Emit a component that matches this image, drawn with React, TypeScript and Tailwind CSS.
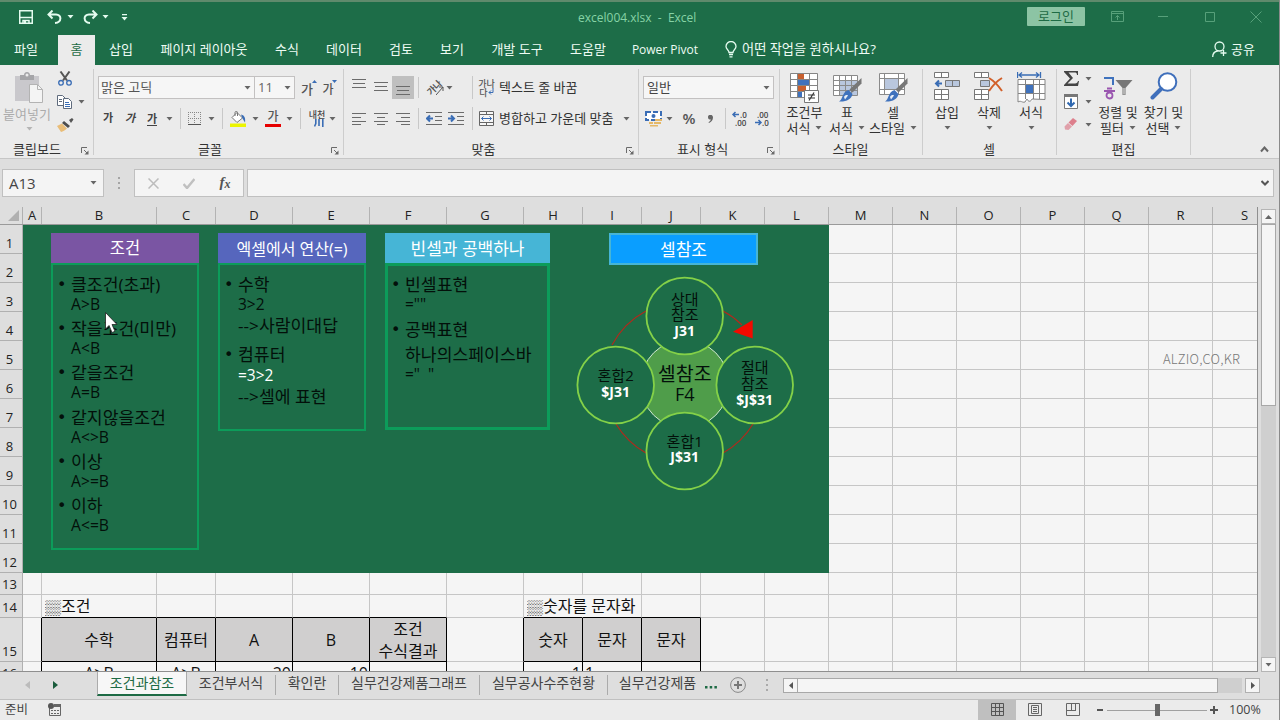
import React from "react";

type Kids = { className?: string; children?: React.ReactNode };

function Slot({ className = "", children }: Kids) {
  return <div className={`flex shrink-0 items-center justify-center whitespace-nowrap ${className}`}>{children}</div>;
}

function Caret({ className = "text-[#666]" }: { className?: string }) {
  return (
    <svg width="7" height="4" viewBox="0 0 7 4" className={`shrink-0 ${className}`}>
      <path d="M0.5 0h6L3.5 3.6z" fill="currentColor" />
    </svg>
  );
}

function Divider({ className = "" }: { className?: string }) {
  return <div className={`w-px shrink-0 bg-[#c8c8c8] ${className}`} />;
}

function Launcher() {
  return (
    <svg width="8" height="8" viewBox="0 0 8 8" fill="none" stroke="#6a6a6a">
      <path d="M0.5 6V0.5H6" />
      <path d="M3 3l3.5 3.5" />
      <path d="M7.5 3.5v4h-4z" fill="#6a6a6a" stroke="none" />
    </svg>
  );
}

function Group({ className = "", label, launcher = false, labelClass = "", children }: Kids & { label: string; launcher?: boolean; labelClass?: string }) {
  return (
    <section className={`flex shrink-0 flex-col ${className}`}>
      <div className="h-[75px]">{children}</div>
      <div className="flex h-[17px] items-center">
        <span className={`flex-1 whitespace-nowrap text-center text-[13px] leading-4 text-[#333] ${labelClass}`}>{label}</span>
        <span className="flex w-[14px] pl-[2px] pt-[4px]">{launcher && <Launcher />}</span>
      </div>
    </section>
  );
}

function GroupEdge() {
  return <div className="mt-1 h-[86px] w-px shrink-0 bg-[#cdcdcd]" />;
}

function Lines({ rows, size = 14 }: { rows: [number, number, number][]; size?: number }) {
  return (
    <svg width={size} height="13" viewBox="0 0 14 13" stroke="#6b6b6b" fill="none">
      {rows.map(([y, a, b]) => (
        <path key={y} d={`M${a} ${y + 0.5}H${b}`} />
      ))}
    </svg>
  );
}

function Indent({ out }: { out: boolean }) {
  return (
    <svg width="16" height="13" viewBox="0 0 16 13" fill="none" stroke="#6b6b6b">
      <path d="M0 0.5h16M9 4.5h7M9 8.5h7M0 12.5h16" />
      {out ? <path d="M7 6.5H1.5M4 3.5l-3 3 3 3" stroke="#3a6db5" strokeWidth="2" /> : <path d="M0 6.5h5.5M3 3.5l3 3-3 3" stroke="#3a6db5" strokeWidth="2" />}
    </svg>
  );
}

function Brush() {
  return (
    <>
      <path d="M29.500 6v5.500l-9 9-3-3z" fill="#777" />
      <path d="M16.500 18l4 4c-1 5-6 8-13.500 7.500 4-2 3-9.500 9.500-11.500z" fill="#3f72bd" />
      <path d="M12 25c1-2 3-2.500 4-1.500l-3 4z" fill="#e8eef7" />
    </>
  );
}

function CondIcon() {
  return (
    <svg width="31" height="31" viewBox="0 0 31 31" fill="none">
      <path d="M1 1.5h27v24H1z" fill="#fff" />
      <path d="M9 2h6v5H9zM9 14h8v6H9z" fill="#c8602f" />
      <path d="M9 8h11v5H9zM9 20h4v5H9z" fill="#3f72bd" />
      <path d="M1.5 1.5h27v24h-27zM1 7.5h28M1 13.500h28M1 19.500h28M8.500 1v25M20.500 1v24" stroke="#858585" />
      <path d="M15.500 18.500h14v12h-14z" fill="#fff" stroke="#777" />
      <path d="M19 23h7M19 26h7M25 20.500l-5 8" stroke="#333" strokeWidth="1.200" />
    </svg>
  );
}

function TableIcon() {
  return (
    <svg width="30" height="31" viewBox="0 0 30 31" fill="none">
      <path d="M1 3h24v20H1z" fill="#fff" />
      <path d="M7 8h18v15H7z" fill="#b9c7de" />
      <path d="M1.500 3.500h24v20h-24zM1 8.500h25M1 13.500h25M1 18.500h25M7.500 3v21M13.500 3v21M19.500 3v21" stroke="#8a8a8a" />
      <Brush />
    </svg>
  );
}

function CellStyleIcon() {
  return (
    <svg width="30" height="31" viewBox="0 0 30 31" fill="none">
      <path d="M1 1h25v21H1z" fill="#fff" />
      <path d="M6 6h15v11H6z" fill="#b9c7de" />
      <path d="M1.500 1.500h25v21h-25zM1 6.500h25M1 17.500h25M6.500 1v22M20.500 1v22" stroke="#8a8a8a" />
      <Brush />
    </svg>
  );
}

function InsertIcon() {
  return (
    <svg width="27" height="28" viewBox="0 0 27 28" fill="none" stroke="#777">
      <path d="M0.500 0.500h14v5h-14zM7.500 0v6M0.500 17.500h14v10h-14zM7.500 17v11M0 22.500h15" fill="#fff" />
      <path d="M11.500 8.500h14v6h-14zM18.500 8v7" fill="#b9c7de" />
      <path d="M8 11.500H2M5 8.500l-3 3 3 3" stroke="#3a6db5" strokeWidth="2" />
    </svg>
  );
}

function DeleteIcon() {
  return (
    <svg width="30" height="28" viewBox="0 0 30 28" fill="none" stroke="#777">
      <path d="M0.500 0.500h14v5h-14zM7.500 0v6M0.500 17.500h14v10h-14zM7.500 17v11M0 22.500h15" fill="#fff" />
      <path d="M6.500 8.500h9v6h-9z" fill="#b9c7de" />
      <path d="M15 6c5 3 9 7 13 13M28 6c-5 3-9 7-13 13" stroke="#d2602a" strokeWidth="2" />
    </svg>
  );
}

function FormatIcon() {
  return (
    <svg width="29" height="31" viewBox="0 0 29 31" fill="none">
      <path d="M0.500 0v6M23.500 0v6M2 3h20M5 0.500L2 3l3 2.500M19 0.500l3 2.500-3 2.500" stroke="#3a6db5" strokeWidth="1.300" />
      <path d="M1 7h27v20H17c-2 3-4 3-5 1-1 3-7 2-11 2z" fill="#fff" />
      <path d="M9 12h7v9H9z" fill="#3f72bd" />
      <path d="M28 27.500V7.500H1v22.500c3-2 4 1 7 0l2-3c1 3 4 3 5 0zM1 12.500h27M1 21.500h27M8.500 7v20M16.500 7v20M22.500 7v20" stroke="#858585" />
    </svg>
  );
}

function FormatBig({ className, icon, a, b }: { className: string; icon: React.ReactNode; a: string; b?: string }) {
  return (
    <div className={`flex shrink-0 flex-col items-center whitespace-nowrap pt-[7px] text-[13px] leading-4 text-[#333] ${className}`}>
      <div className="flex h-[32px] items-start justify-center">{icon}</div>
      <div className="h-4">{a}</div>
      <div className="flex h-4 items-center gap-[5px]">
        {b}
        <Caret />
      </div>
    </div>
  );
}

function Ribbon() {
  return (
    <div className="flex h-[94px] shrink-0 border-b border-[#c6c6c6] bg-[#ebebeb]">
      <Group className="w-[93px]" label="클립보드" launcher labelClass="pr-[5px]">
        <div className="flex h-full">
          <div className="flex w-[54px] flex-col items-center pt-[7px] text-[#ababab]">
            <svg width="28" height="32" viewBox="0 0 28 32" fill="none" className="ml-1">
              <path d="M0 4h24v25H0z" fill="#c9c8cc" />
              <path d="M5 3h4c0-4 6-4 6 0h4v5H5z" fill="#a5a5a8" />
              <circle cx="12" cy="3" r="1.500" fill="#ebebeb" />
              <path d="M14.500 12.500h8l5 5v13h-13z" fill="#f4f4f4" stroke="#b3b3b3" />
              <path d="M22.500 12.500v5h5" stroke="#b3b3b3" />
            </svg>
            <span className="mt-0.5 whitespace-nowrap text-[13px] leading-4">붙여넣기</span>
            <Caret className="ml-1 mt-[5px] text-[#b5b5b5]" />
          </div>
          <div className="flex flex-col pt-[2px]">
            <div className="flex h-[23px] items-center pl-[4px]">
              <svg width="14" height="15" viewBox="0 0 14 15" fill="none">
                <path d="M2.500 0.500L9 9.500M11.500 0.500L5 9.500" stroke="#555" strokeWidth="2" />
                <circle cx="3" cy="11.800" r="2.300" stroke="#3a6db5" strokeWidth="1.300" />
                <circle cx="11" cy="11.800" r="2.300" stroke="#3a6db5" strokeWidth="1.300" />
              </svg>
            </div>
            <div className="flex h-[23px] items-center gap-[6px] pl-[3px]">
              <svg width="15" height="14" viewBox="0 0 15 14" fill="#fff" stroke="#5f6b7d">
                <path d="M0.500 0.500h5l3 3v7h-8z" />
                <path d="M2 4.500h3M2 6.500h3" />
                <path d="M6.500 3.500h5l3 3v7h-8z" />
                <path d="M8 7.500h4M8 9.500h5M8 11.500h5" stroke="#3a6db5" />
              </svg>
              <Caret />
            </div>
            <div className="flex h-[23px] items-center pl-[3px]">
              <svg width="17" height="14" viewBox="0 0 17 14">
                <path d="M12 2l3-2 1.500 1.500L14 5z" fill="#555" />
                <path d="M7 3l6 5-2 2-6-5z" fill="#4d4d4d" />
                <path d="M5 5.500l5 5c-2 2-4 3-6 3.500L0 8z" fill="#e9bd78" />
              </svg>
            </div>
          </div>
        </div>
      </Group>
      <GroupEdge />
      <Group className="w-[249px]" label="글꼴" launcher labelClass="pr-[3px]">
        <div className="flex h-full flex-col">
          <div className="mt-[11px] flex h-[23px] pl-[4px]">
            <div className="flex w-[157px] items-center justify-between border border-[#c3c1c1] bg-[#f6f6f6] pl-[2px] pr-[3px] text-[13px] leading-none text-[#555]">
              맑은 고딕
              <Caret />
            </div>
            <div className="-ml-px flex w-[41px] items-center justify-between border border-[#c3c1c1] bg-[#f6f6f6] pl-[3px] pr-[3px] text-[13px] leading-none text-[#666]">
              11
              <Caret />
            </div>
            <Slot className="relative ml-[1px] w-[22px] pt-1 text-[13px] font-medium text-[#555]">
              가
              <svg width="5" height="3" viewBox="0 0 5 3" className="absolute right-[1px] top-[4px]">
                <path d="M0 3L2.500 0 5 3z" fill="#3a6db5" />
              </svg>
            </Slot>
            <Slot className="relative w-[20px] pt-1 text-[12px] font-medium text-[#555]">
              가
              <svg width="5" height="3" viewBox="0 0 5 3" className="absolute right-[1px] top-[4px]">
                <path d="M0 0L2.500 3 5 0z" fill="#3a6db5" />
              </svg>
            </Slot>
          </div>
          <div className="mt-[8px] flex h-[23px] items-center pl-[3px] text-[#444]">
            <Slot className="w-[22px] text-[11px] font-bold">가</Slot>
            <Slot className="w-[22px] text-[11px] font-bold italic">가</Slot>
            <Slot className="w-[22px] text-[11px] font-bold"><span className="border-b border-[#444] leading-[13px]">가</span></Slot>
            <Slot className="w-[12px]"><Caret /></Slot>
            <Slot className="w-[11px]"><Divider className="h-[21px]" /></Slot>
            <Slot className="w-[16px]">
              <svg width="13" height="13" viewBox="0 0 13 13" fill="none" stroke="#888">
                <path d="M0.500 0v12M6.500 0v12M12.500 0v12M0 0.500h13M0 6.500h13" strokeDasharray="1 1" />
                <path d="M0 12.500h13" stroke="#555" />
              </svg>
            </Slot>
            <Slot className="w-[18px]"><Caret /></Slot>
            <Slot className="w-[4px]"><Divider className="h-[21px]" /></Slot>
            <Slot className="w-[27px]">
              <svg width="16" height="16" viewBox="0 0 16 16" fill="none">
                <path d="M7 1.500L12.500 7 7 11.500 2 6.500z" fill="#fff" stroke="#777" />
                <path d="M5 5V1.500c0-1.500 2.500-1.500 2.500 0V5" stroke="#777" />
                <path d="M11 3.500c4 1 4.500 4 4 8l-2.500-4z" fill="#3a6db5" />
                <path d="M0 12.500h16V16H0z" fill="#ecf500" />
              </svg>
            </Slot>
            <Slot className="w-[9px]"><Caret /></Slot>
            <Slot className="w-[26px]"><span className="h-[16px] border-b-[3.500px] border-[#e60000] px-[2px] text-[12px] font-medium leading-[12px] text-[#555]">가</span></Slot>
            <Slot className="w-[7px]"><Caret /></Slot>
            <Slot className="w-[15px]"><Divider className="h-[21px]" /></Slot>
            <Slot className="w-[18px] flex-col text-[9px] font-medium">
              <span className="leading-[9px]">내천</span>
              <svg width="10" height="8" viewBox="0 0 10 8" fill="none" stroke="#3a6db5" strokeWidth="1.600" className="ml-1"><path d="M1.800 0v4.500L0.500 7.500M5 0v7M8.800 0v8" /></svg>
            </Slot>
            <Slot className="w-[12px]"><Caret /></Slot>
          </div>
        </div>
      </Group>
      <GroupEdge />
      <Group className="w-[294px]" label="맞춤" launcher labelClass="pr-[1px]">
        <div className="flex h-full flex-col">
          <div className="mt-[11px] flex h-[23px] items-center pl-[4px]">
            <Slot className="w-[22px] pb-[10px]"><Lines rows={[[3, 0, 14], [7, 1, 13], [11, 0, 14]]} /></Slot>
            <Slot className="w-[22px] pb-[4px]"><Lines rows={[[3, 0, 14], [7, 1, 13], [11, 0, 14]]} /></Slot>
            <Slot className="h-[23px] w-[22px] bg-[#bfbfbf] pt-[4px]"><Lines rows={[[3, 0, 14], [7, 1, 13], [11, 0, 14]]} /></Slot>
            <Slot className="w-[9px]"><Divider className="h-[21px]" /></Slot>
            <Slot className="w-[24px]">
              <span className="-rotate-45 text-[9px] font-bold leading-none text-[#555]">가나</span>
              <svg width="8" height="12" viewBox="0 0 8 12" className="-ml-[6px] mt-1" fill="none" stroke="#555"><path d="M0 11L7 3M3 3h4v4" /></svg>
            </Slot>
            <Slot className="w-[4px]"><Caret /></Slot>
            <Slot className="ml-[14px] w-[14px]"><Divider className="h-[23px]" /></Slot>
            <Slot className="w-[15px] flex-col text-[9px] font-medium leading-[9px] text-[#555]">
              <span>가나</span>
              <span className="flex">다<svg width="6" height="7" viewBox="0 0 6 7" fill="none" stroke="#3a6db5"><path d="M5 0v4.500H1M3 2.500L1 4.500l2 2" /></svg></span>
            </Slot>
            <span className="ml-[5px] whitespace-nowrap text-[13px] leading-none text-[#333]">텍스트 줄 바꿈</span>
          </div>
          <div className="mt-[8px] flex h-[23px] items-center pl-[4px]">
            <Slot className="w-[22px]"><Lines rows={[[1, 0, 14], [5, 0, 9], [9, 0, 14], [12, 0, 9]]} /></Slot>
            <Slot className="w-[22px]"><Lines rows={[[1, 0, 14], [5, 3, 11], [9, 0, 14], [12, 3, 11]]} /></Slot>
            <Slot className="w-[22px]"><Lines rows={[[1, 0, 14], [5, 5, 14], [9, 0, 14], [12, 5, 14]]} /></Slot>
            <Slot className="w-[9px]"><Divider className="h-[21px]" /></Slot>
            <Slot className="w-[22px]"><Indent out /></Slot>
            <Slot className="w-[22px]"><Indent out={false} /></Slot>
            <Slot className="w-[11px]"><Divider className="h-[23px]" /></Slot>
            <svg width="15" height="15" viewBox="0 0 15 15" fill="none" stroke="#666" className="ml-[1px]">
              <path d="M0.500 0.500h14v14h-14zM0 3.500h15M0 11.500h15M7.500 0v3.500M7.500 11.500V15" fill="#f6f6f6" />
              <path d="M2.500 7.500h10M4.500 5.500l-2 2 2 2M10.500 5.500l2 2-2 2" stroke="#3a6db5" />
            </svg>
            <span className="ml-[5px] w-[124px] whitespace-nowrap text-[13px] leading-none text-[#333]">병합하고 가운데 맞춤</span>
            <Caret />
          </div>
        </div>
      </Group>
      <GroupEdge />
      <Group className="w-[140px]" label="표시 형식" launcher labelClass="pl-px">
        <div className="flex h-full flex-col">
          <div className="ml-[4px] mt-[11px] flex h-[23px] w-[131px] items-center justify-between border border-[#c3c1c1] bg-[#f6f6f6] pl-[3px] pr-[3px] text-[13px] leading-none text-[#444]">
            일반
            <Caret />
          </div>
          <div className="mt-[8px] flex h-[23px] items-center pl-[6px] text-[#555]">
            <svg width="18" height="17" viewBox="0 0 18 17" fill="none">
              <path d="M1 2h15v8H1z" fill="#fff" stroke="#3a6db5" strokeWidth="2" strokeDasharray="5 2" />
              <circle cx="8.500" cy="6" r="2" fill="#3a6db5" />
              <path d="M10 9h7v2h-7zM9 12h7v2H9zM4 12h4v2H4zM5 15h8v1.500H5z" fill="#e5b867" />
            </svg>
            <Slot className="w-[12px]"><Caret /></Slot>
            <Slot className="ml-[3px] w-[22px] text-[15px] font-semibold">%</Slot>
            <Slot className="w-[20px]">
              <svg width="5" height="8" viewBox="0 0 5 8"><path d="M0 2c0-3 5-3 5 0.500C5 5 3.500 7 1 8L0.500 7.200C2 6.500 2.700 5.500 2.800 4.300 1 5 0 4 0 2z" fill="#666" /></svg>
            </Slot>
            <Slot className="w-[11px]"><Divider className="h-[21px]" /></Slot>
            <Slot className="ml-[-1px] w-[20px]">
              <svg width="16" height="15" viewBox="0 0 16 15" fill="none" className="overflow-visible">
                <path d="M7 3.500H1.500M3.500 1L1 3.500 3.500 6" stroke="#3a6db5" strokeWidth="1.500" />
                <text x="8" y="6.500" fontSize="8" fontWeight="600" fill="#444">.0</text>
                <text x="3" y="15" fontSize="8" fontWeight="600" fill="#444">.00</text>
              </svg>
            </Slot>
            <Slot className="ml-[2px] w-[20px]">
              <svg width="16" height="15" viewBox="0 0 16 15" fill="none" className="overflow-visible">
                <path d="M1 11.500h5.500M4.500 9L7 11.500 4.500 14" stroke="#3a6db5" strokeWidth="1.500" />
                <text x="3" y="6.500" fontSize="8" fontWeight="600" fill="#444">.00</text>
                <text x="8" y="15" fontSize="8" fontWeight="600" fill="#444">.0</text>
              </svg>
            </Slot>
          </div>
        </div>
      </Group>
      <GroupEdge />
      <Group className="w-[142px]" label="스타일" labelClass="pl-[13px]">
        <div className="flex h-full">
          <FormatBig className="ml-[3px] w-[43px]" icon={<CondIcon />} a="조건부" b="서식" />
          <FormatBig className="w-[42px]" icon={<TableIcon />} a="표" b="서식" />
          <FormatBig className="w-[50px]" icon={<CellStyleIcon />} a="셀" b="스타일" />
        </div>
      </Group>
      <GroupEdge />
      <Group className="w-[133px]" label="셀" labelClass="pl-[13px]">
        <div className="flex h-full">
          <FormatBig className="ml-[3px] w-[42px]" icon={<InsertIcon />} a="삽입" />
          <FormatBig className="w-[42px]" icon={<DeleteIcon />} a="삭제" />
          <FormatBig className="w-[42px]" icon={<FormatIcon />} a="서식" />
        </div>
      </Group>
      <GroupEdge />
      <Group className="w-[133px]" label="편집" labelClass="pl-[14px]">
        <div className="flex h-full">
          <div className="mr-[3px] flex w-[35px] flex-col pl-[7px] pt-[2px]">
            <div className="flex h-[23px] items-center justify-between">
              <svg width="15" height="15" viewBox="0 0 15 15"><path d="M0 0h14v4h-1c0-2-1-2.500-2.500-2.500H4.500L9 7l-5.500 5.500H11c2 0 2.500-1 3-2.500h1L14 15H0v-1l6-6.500L0 1z" fill="#444" /></svg>
              <Caret />
            </div>
            <div className="flex h-[23px] items-center justify-between">
              <svg width="14" height="15" viewBox="0 0 14 15" fill="none"><path d="M0.500 0.500h13v14h-13z" fill="#fff" stroke="#777" /><path d="M0 0h14v3H0z" fill="#777" /><path d="M7 4.500V12M3.500 8.500L7 12l3.500-3.500" stroke="#2f68b0" strokeWidth="2" /></svg>
              <Caret />
            </div>
            <div className="flex h-[23px] items-center justify-between">
              <svg width="14" height="13" viewBox="0 0 14 13"><path d="M9 0l4 3-4.500 5-4-3.500z" fill="#dd7f8c" /><path d="M4 5l4 3.500L4.500 12 1 11.500 0.500 8.500z" fill="#e0a0aa" /></svg>
              <Caret />
            </div>
          </div>
          <FormatBig
            className="w-[46px]"
            icon={
              <svg width="30" height="28" viewBox="0 0 30 28" fill="none" className="mt-1">
                <path d="M1 2h9v7" stroke="#3f72bd" strokeWidth="2" />
                <path d="M4 12.500h5M1 15h11" stroke="#9a57b0" strokeWidth="1.800" />
                <circle cx="6.500" cy="19.500" r="3" stroke="#9a57b0" strokeWidth="1.800" />
                <path d="M12.500 4h17l-7 8v7h-3v-7z" fill="#777" />
                <path d="M21 12v6.500" stroke="#ebebeb" />
              </svg>
            }
            a="정렬 및"
            b="필터"
          />
          <FormatBig
            className="w-[45px]"
            icon={
              <svg width="28" height="28" viewBox="0 0 28 28" fill="none">
                <circle cx="17.500" cy="10" r="8.800" fill="#fff" stroke="#3f6fbb" strokeWidth="2" />
                <path d="M11 17l-8.500 8.500" stroke="#3f6fbb" strokeWidth="4" strokeLinecap="round" />
              </svg>
            }
            a="찾기 및"
            b="선택"
          />
        </div>
      </Group>
      <GroupEdge />
      <div className="flex flex-1 items-end justify-end pb-[5px] pr-[10px]">
        <svg width="9" height="7" viewBox="0 0 9 7" fill="none"><path d="M1 5.500l3.500-4 3.500 4" stroke="#666" strokeWidth="2" /></svg>
      </div>
    </div>
  );
}

function TitleBar() {
  return (
    <header className="relative flex h-[35px] shrink-0 items-center border-t-2 border-[#5f8a6c] pb-[3px]">
      <svg width="14" height="14" viewBox="0 0 14 14" fill="none" className="ml-[19px]" stroke="#e4fbef" strokeWidth="1.500">
        <path d="M0.750 0.750h12.500v12.500H0.750zM1 7.500h12M4 13V10.500h6V13" />
        <path d="M5 11h2v2H5z" fill="#e4fbef" stroke="none" />
      </svg>
      <svg width="16" height="14" viewBox="0 0 16 14" fill="none" className="ml-[14px]" stroke="#e4fbef" strokeWidth="2">
        <path d="M5.500 0.500L1.500 4.500l4 4M2 4.500h7c6 0 6 8-1 8.500" />
      </svg>
      <Caret className="ml-[4px] text-[#e4fbef]" />
      <svg width="16" height="14" viewBox="0 0 16 14" fill="none" className="ml-[8px]" stroke="#e4fbef" strokeWidth="2">
        <path d="M10.500 0.500l4 4-4 4M14 4.500H7c-6 0-6 8 1 8.500" />
      </svg>
      <Caret className="ml-[4px] text-[#e4fbef]" />
      <svg width="7" height="7" viewBox="0 0 7 7" className="ml-[12px]"><path d="M1 0h5v1.300H1zM0.500 3h6L3.500 6.600z" fill="#e4fbef" /></svg>
      <div className="ml-[450px] w-[130px] whitespace-pre pt-px text-[12px] text-[#86d3a6]">excel004.xlsx  -  Excel</div>
      <div className="flex flex-1 items-center justify-end pr-[17px]">
        <div className="mb-px flex h-[19px] w-[58px] items-center justify-center rounded-[1px] bg-[#8cc4a4] text-[13px] leading-none text-[#1e6b45]">로그인</div>
        <svg width="13" height="11" viewBox="0 0 13 11" fill="none" stroke="#57a07a" className="mb-px ml-[26px]"><path d="M0.500 0.500h12v10H0.500zM0 2.500h13M6.500 9V4.500M4.500 6.500l2-2 2 2" /></svg>
        <svg width="10" height="2" viewBox="0 0 10 2" className="ml-[34px]"><path d="M0 0.500h10" stroke="#57a07a" /></svg>
        <svg width="10" height="10" viewBox="0 0 10 10" fill="none" stroke="#57a07a" className="mb-px ml-[37px]"><path d="M0.500 0.500h9v9h-9z" /></svg>
        <svg width="12" height="12" viewBox="0 0 12 12" fill="none" stroke="#57a07a" className="mb-px ml-[35px]"><path d="M0.500 0.500l11 11M11.500 0.500l-11 11" /></svg>
      </div>
    </header>
  );
}

function Tabs() {
  return (
    <nav className="flex h-[30px] shrink-0 items-stretch text-[13px] leading-none text-[#eefcf4]">
      <Slot className="mr-[6px] w-[52px] pb-[2px]">파일</Slot>
      <Slot className="w-[37px] bg-[#ebebeb] pb-[2px] text-[#1e6b45]">홈</Slot>
      <Slot className="w-[52px] pb-[2px]">삽입</Slot>
      <Slot className="w-[114px] pb-[2px]">페이지 레이아웃</Slot>
      <Slot className="w-[52px] pb-[2px]">수식</Slot>
      <Slot className="w-[62px] pb-[2px]">데이터</Slot>
      <Slot className="w-[52px] pb-[2px]">검토</Slot>
      <Slot className="w-[50px] pb-[2px]">보기</Slot>
      <Slot className="w-[80px] pb-[2px]">개발 도구</Slot>
      <Slot className="w-[62px] pb-[2px]">도움말</Slot>
      <Slot className="w-[92px] pb-px text-[12px]">Power Pivot</Slot>
      <Slot className="ml-[13px] w-[13px] pb-[2px]">
        <svg width="12" height="17" viewBox="0 0 12 17" fill="none" stroke="#e4fbef" strokeWidth="1.300"><path d="M4 11.500C4 9 1 8.500 1 5.500a5 5 0 0 1 10 0c0 3-3 3.500-3 6zM4 13.500h4M4.500 15.800h3" /></svg>
      </Slot>
      <Slot className="ml-[5px] pb-px text-[13.200px]">어떤 작업을 원하시나요?</Slot>
      <div className="flex flex-1 items-center justify-end gap-[4px] pb-[2px] pr-[24px]">
        <svg width="15" height="16" viewBox="0 0 15 16" fill="none" stroke="#e4fbef" strokeWidth="1.300"><circle cx="7.500" cy="5.500" r="4.500" /><path d="M0.700 16c0-3.500 2-5.500 5-6M11.500 9v6M8.500 12h6" /></svg>
        공유
      </div>
    </nav>
  );
}

function FormulaBar() {
  return (
    <div className="flex h-[48px] shrink-0 pl-[2px] pt-[10px]">
      <div className="flex h-[28px] w-[102px] items-center justify-between border border-[#c0c0c0] bg-[#f4f4f4] pl-[6px] pr-[6px] text-[15px] text-[#444]">
        A13
        <Caret />
      </div>
      <Slot className="h-[28px] w-[30px]"><svg width="2" height="12" viewBox="0 0 2 12"><path d="M0 0h2v2H0zM0 5h2v2H0zM0 10h2v2H0z" fill="#a5a5a5" /></svg></Slot>
      <div className="flex h-[28px] w-[110px] items-center border border-[#c0c0c0] bg-[#f4f4f4]">
        <Slot className="w-[36px]"><svg width="11" height="11" viewBox="0 0 11 11"><path d="M0.500 0.500l10 10M10.500 0.500l-10 10" stroke="#bcbcbc" strokeWidth="1.500" /></svg></Slot>
        <Slot className="w-[36px]"><svg width="12" height="11" viewBox="0 0 12 11" fill="none"><path d="M0.500 6l3.500 4L11.500 1" stroke="#c0c0c0" strokeWidth="2.500" /></svg></Slot>
        <Slot className="w-[36px] pb-px font-['Liberation_Serif',serif] text-[15px] font-bold italic leading-none text-[#555]">f<span className="pt-[2px] text-[12px]">x</span></Slot>
      </div>
      <div className="ml-[3px] flex h-[28px] w-[1027px] items-center justify-end border border-[#c0c0c0] bg-[#f4f4f4] pr-[4px]">
        <svg width="8" height="6" viewBox="0 0 8 6" fill="none"><path d="M0.500 1L4 4.500 7.500 1" stroke="#555" strokeWidth="2" /></svg>
      </div>
    </div>
  );
}

const columns: [string, string][] = [
  ["A", "w-[19px]"],
  ["B", "w-[115px]"],
  ["C", "w-[59px]"],
  ["D", "w-[77px]"],
  ["E", "w-[77px]"],
  ["F", "w-[77px]"],
  ["G", "w-[77px]"],
  ["H", "w-[59px]"],
  ["I", "w-[59px]"],
  ["J", "w-[59px]"],
  ["K", "w-[64px]"],
  ["L", "w-[64px]"],
  ["M", "w-[64px]"],
  ["N", "w-[64px]"],
  ["O", "w-[64px]"],
  ["P", "w-[64px]"],
  ["Q", "w-[64px]"],
  ["R", "w-[64px]"],
  ["S", "w-[64px]"],
];

const rows: [number, string][] = [
  ...Array.from({ length: 12 }, (_, i): [number, string] => [i + 1, "h-[29px]"]),
  [13, "h-[22px]"],
  [14, "h-[23px]"],
  [15, "h-[44px]"],
  [16, "h-[22px]"],
];

const shade = (
  <span className="mb-[7px] inline-block h-[15px] w-[16px] shrink-0 text-left">
    <span className="inline-block origin-left scale-x-[1.900] font-['Liberation_Mono'] text-[14px] leading-[15px] text-[#444]">▒</span>
  </span>
);

const cells: Record<string, React.ReactNode> = {
  B14: <>{shade}조건</>,
  H14: <>{shade}숫자를 문자화</>,
  B15: "수학",
  C15: "컴퓨터",
  D15: "A",
  E15: "B",
  F15: "조건\n수식결과",
  H15: "숫자",
  I15: "문자",
  J15: "문자",
  B16: "A>B",
  C16: "A>B",
  D16: "20",
  E16: "10",
  H16: "1",
  I16: "1",
};

function cellClass(col: string, row: number) {
  const inTable = "BCDEFHIJ".includes(col);
  const beforeTable = col === "A" || col === "G";
  let c = "";
  if (row >= 15 && (inTable || beforeTable)) c += " border-r-black";
  else if (row === 14 && col === "H") c += " border-r-transparent";
  else c += " border-r-[#c6c6c6]";
  if ((row === 14 || row === 15) && inTable) c += " border-b-black";
  else c += " border-b-[#c6c6c6]";
  if (row === 15 && inTable) c += " bg-[#d0cfcf]";
  if (row === 14) c += " justify-start pl-[3px]";
  else if (row === 16 && "DEH".includes(col)) c += " justify-end pr-[1px]";
  else if (row === 16 && col === "I") c += " justify-start pl-[2px]";
  else c += " justify-center";
  return c;
}

function Panel({ className, head, headClass, bodyClass, children }: Kids & { head: string; headClass: string; bodyClass: string }) {
  return (
    <div className={`absolute flex flex-col ${className}`}>
      <div className={`flex h-[30px] shrink-0 items-center justify-center pt-px leading-none text-white ${headClass}`}>{head}</div>
      <div className={`flex-1 border-[#0c9c5a] text-[17.200px] leading-5 text-[#03100a] ${bodyClass}`}>{children}</div>
    </div>
  );
}

function Item({ text, lines, className = "" }: { text: string; lines: React.ReactNode; className?: string }) {
  return (
    <div className={`flex whitespace-nowrap ${className}`}>
      <span className="ml-[-1px] w-[14px] shrink-0 font-['DejaVu_Sans'] text-[16px]">•</span>
      <div className="flex flex-col">
        <span className="h-5">{text}</span>
        {lines}
      </div>
    </div>
  );
}

function Diagram() {
  const nodes: [number, number, [string, number, boolean][]][] = [
    [684.7, 316, [["상대", 305, false], ["참조", 320, false], ["J31", 336, true]]],
    [615.7, 385, [["혼합2", 381, false], ["$J31", 397, true]]],
    [754.7, 385, [["절대", 373, false], ["참조", 388.5, false], ["$J$31", 405, true]]],
    [684.7, 451, [["혼합1", 447, false], ["J$31", 462, true]]],
  ];
  return (
    <svg className="absolute left-[547px] top-[45px]" width="230" height="230" viewBox="570 270 230 230" textAnchor="middle">
      <g fill="none" stroke="#b02a1c" strokeWidth="1.200">
        <path d="M612 345A82.500 82.500 0 0 1 646 311M723 311A82.500 82.500 0 0 1 742 325M616 424A82.500 82.500 0 0 0 646 453M753 424A82.500 82.500 0 0 1 723 453" />
      </g>
      <circle cx="684.700" cy="384" r="44" fill="#4f9d4a" stroke="#cfe8cf" />
      <path d="M733 331.700L752.700 320v18.500z" fill="#f20a00" />
      <text x="684.700" y="381" fontSize="19.500" fill="#03100a">셀참조</text>
      <text x="684.700" y="400.500" fontSize="18" fill="#03100a">F4</text>
      {nodes.map(([cx, cy, labels]) => (
        <g key={`${cx}-${cy}`}>
          <circle cx={cx} cy={cy} r="38.300" fill="#1d6d48" stroke="#84d148" strokeWidth="1.800" />
          {labels.map(([t, y, strong]) => (
            <text key={t} x={cx} y={y} fontSize={strong ? 14 : 15} fontWeight={strong ? 700 : 400} fill={strong ? "#ffffff" : "#03100a"}>
              {t}
            </text>
          ))}
        </g>
      ))}
    </svg>
  );
}

function Overlay() {
  const conditions = [
    ["클조건(초과)", "A>B"],
    ["작을조건(미만)", "A<B"],
    ["같을조건", "A=B"],
    ["같지않을조건", "A<>B"],
    ["이상", "A>=B"],
    ["이하", "A<=B"],
  ];
  return (
    <div className="absolute left-[23px] top-[18px] h-[348px] w-[806px] bg-[#1d6d48]">
      <Panel className="left-[28px] top-[8px] h-[317px] w-[148px]" head="조건" headClass="bg-[#7a55a3] text-[16.500px]" bodyClass="border-2 pl-[5px] pt-[10px]">
        {conditions.map(([t, l]) => (
          <Item key={t} className="h-[44.200px]" text={t} lines={<span className="h-5 text-[15.700px] leading-[18px]">{l}</span>} />
        ))}
      </Panel>
      <Panel className="left-[195px] top-[8px] h-[198px] w-[148px]" head="엑셀에서 연산(=)" headClass="bg-[#5666bd] text-[16px]" bodyClass="border-2 pl-[5px] pt-[10px]">
        <Item className="h-[70px]" text="수학" lines={<><span className="h-[20px] text-[15.500px] leading-[18px]">3&gt;2</span><span className="leading-[22px]">--&gt;사람이대답</span></>} />
        <Item text="컴퓨터" lines={<><span className="h-[21px] text-[15.500px] leading-[20px] text-white">=3&gt;2</span><span className="leading-[22px]">--&gt;셀에 표현</span></>} />
      </Panel>
      <Panel className="left-[362px] top-[8px] h-[197px] w-[165px]" head="빈셀과 공백하나" headClass="bg-[#46b5d6] text-[17px]" bodyClass="border-[3px] pl-[4px] pt-[9px]">
        <Item className="h-[45px]" text="빈셀표현" lines={<span className="h-5 text-[15.500px] leading-[18px]">=""</span>} />
        <Item text="공백표현" lines={<><span className="mt-[5px] h-5">하나의스페이스바</span><span className="whitespace-pre text-[15.500px] leading-[18px]">="  "</span></>} />
      </Panel>
      <div className="absolute left-[586px] top-[8px] flex h-[32px] w-[149px] items-center justify-center border-2 border-[#46b5d6] bg-[#0a9eff] text-[17px] leading-none text-white">셀참조</div>
      <Diagram />
      <svg className="absolute left-[82px] top-[87px]" width="13" height="22" viewBox="0 0 13 22"><path d="M0.500 0.500v16.500l3.500-3.500 3 7 3-1.200-3-6.800h5z" fill="#fff" stroke="#222" strokeWidth="0.800" /></svg>
    </div>
  );
}

function Sheet() {
  return (
    <div className="relative h-[465px] w-[1258px] shrink-0 overflow-hidden border-b border-r border-[#8f8f8f] bg-[#f5f5f5]">
      <div className="flex h-[18px] border-b border-[#9a9a9a] bg-[#dedede] text-[13px] text-[#222]">
        <div className="flex w-[23px] shrink-0 items-end justify-end border-r border-[#b0b0b0] pb-[3px] pr-[3px]">
          <svg width="11" height="11" viewBox="0 0 11 11"><path d="M11 0v11H0z" fill="#b0b0b0" /></svg>
        </div>
        {columns.map(([name, w]) => (
          <div key={name} className={`flex shrink-0 items-center justify-center border-r border-[#b3b3b3] leading-none ${w}`}>{name}</div>
        ))}
      </div>
      {rows.map(([n, h]) => (
        <div key={n} className={`flex ${h}`}>
          <div className="flex w-[23px] shrink-0 items-end justify-center overflow-hidden border-b border-r border-[#b0b0b0] bg-[#dedede] pr-[3px] text-[13px] leading-[19px] text-[#222]">{n}</div>
          {columns.map(([c, w]) => (
            <div key={c} className={`flex shrink-0 items-center whitespace-pre border-b border-r text-center text-[16px] leading-[22px] text-[#111] ${w} ${cellClass(c, n)}`}>{cells[c + n]}</div>
          ))}
        </div>
      ))}
      <Overlay />
      <span className="absolute left-[1163px] top-[142px] font-['Noto_Sans_CJK_KR'] text-[13px] font-light tracking-[0.200px] text-[#777]">ALZIO,CO,KR</span>
    </div>
  );
}

function VerticalScroll() {
  return (
    <div className="ml-[3px] mt-[2px] flex w-[15px] flex-col bg-[#cfcfcf]">
      <Slot className="h-[15px] border border-[#b5b5b5] bg-[#f5f5f5]"><svg width="7" height="4" viewBox="0 0 7 4"><path d="M0 4L3.500 0 7 4z" fill="#666" /></svg></Slot>
      <div className="h-[182px] border border-[#a8a8a8] bg-[#f5f5f5]" />
      <div className="flex-1" />
      <Slot className="h-[15px] border border-[#b5b5b5] bg-[#f5f5f5]"><Caret /></Slot>
    </div>
  );
}

function SheetTabs() {
  return (
    <div className="flex h-[27px] shrink-0 text-[14px] leading-none text-[#444]">
      <Slot className="h-[25px] w-[54px]"><svg width="5" height="8" viewBox="0 0 5 8"><path d="M5 0v8L0 4z" fill="#bbb" /></svg></Slot>
      <Slot className="h-[25px] w-[2px]"><svg width="5" height="8" viewBox="0 0 5 8" className="shrink-0"><path d="M0 0v8l5-4z" fill="#1a5c3c" /></svg></Slot>
      <Slot className="ml-[41px] h-[24px] w-[90px] border-x border-b-2 border-x-[#ababab] border-b-[#1e6b45] bg-[#f7f7f7] text-[#1e6b45]">조건과참조</Slot>
      <Slot className="h-[22px] w-[88px]">조건부서식</Slot>
      <Divider className="mt-[3px] h-[20px] !bg-[#ababab]" />
      <Slot className="h-[22px] w-[62px]">확인란</Slot>
      <Divider className="mt-[3px] h-[20px] !bg-[#ababab]" />
      <Slot className="h-[22px] w-[140px]">실무건강제품그래프</Slot>
      <Divider className="mt-[3px] h-[20px] !bg-[#ababab]" />
      <Slot className="h-[22px] w-[127px]">실무공사수주현황</Slot>
      <Divider className="mt-[3px] h-[20px] !bg-[#ababab]" />
      <Slot className="h-[22px] w-[99px]">실무건강제품</Slot>
      <Slot className="h-[30px] w-[8px]"><svg width="12" height="3" viewBox="0 0 12 3" className="shrink-0"><path d="M0 0h2.500v2.500H0zM4.700 0h2.500v2.500H4.700zM9.400 0h2.500v2.500H9.400z" fill="#1e6b45" /></svg></Slot>
      <Slot className="ml-[14px] h-[26px] w-[18px]"><svg width="16" height="16" viewBox="0 0 16 16" fill="none" stroke="#8a8a8a"><circle cx="8" cy="8" r="7.400" /><path d="M4 8h8M8 4v8" strokeWidth="2" stroke="#777" /></svg></Slot>
      <Slot className="h-[26px] w-[40px]"><svg width="2" height="12" viewBox="0 0 2 12"><path d="M0 0h2v2H0zM0 5h2v2H0zM0 10h2v2H0z" fill="#aaa" /></svg></Slot>
      <div className="ml-[-4px] mt-[6px] flex h-[15px] w-[477px] bg-[#cfcfcf]">
        <Slot className="w-[15px] border border-[#a8a8a8] bg-[#f5f5f5]"><svg width="4" height="7" viewBox="0 0 4 7"><path d="M4 0v7L0 3.500z" fill="#555" /></svg></Slot>
        <div className="w-[420px] border border-l-0 border-[#a8a8a8] bg-[#f5f5f5]" />
        <div className="flex-1" />
        <div className="w-[3px] bg-[#dedede]" />
        <Slot className="w-[15px] border border-[#b0b0b0] bg-[#f5f5f5]"><svg width="4" height="7" viewBox="0 0 4 7"><path d="M0 0v7l4-3.500z" fill="#555" /></svg></Slot>
      </div>
    </div>
  );
}

function StatusBar() {
  return (
    <footer className="flex h-[21px] shrink-0 items-center border-t border-[#c0c0c0] bg-[#ebebeb] text-[12.500px] leading-none text-[#444]">
      <span className="w-[43px] pl-[5px]">준비</span>
      <svg width="13" height="13" viewBox="0 0 13 13" className="mb-px ml-[5px]"><path d="M1.500 5v7.500h11v-11H6" fill="none" stroke="#666" /><path d="M6 1h7v3H6z" fill="#666" /><circle cx="3" cy="3" r="3" fill="#555" /><path d="M3 7h2v1H3zM6 7h2v1H6zM9 7h2v1H9zM3 10h2v1H3zM6 10h2v1H6zM9 10h2v1H9z" fill="#666" /></svg>
      <div className="flex-1" />
      <Slot className="h-[20px] w-[38px] bg-[#bfbfbf] pb-px"><svg width="13" height="13" viewBox="0 0 13 13" fill="none" stroke="#555"><path d="M0.500 0.500h12v12h-12zM4.500 0v13M8.500 0v13M0 4.500h13M0 8.500h13" /></svg></Slot>
      <Slot className="h-[20px] w-[38px] pb-px"><svg width="14" height="13" viewBox="0 0 14 13" fill="none" stroke="#666"><path d="M0.500 0.500h13v12h-13zM3.500 2.500h7v8h-7zM5 4.500h4M5 6.500h4M5 8.500h4" /></svg></Slot>
      <Slot className="h-[20px] w-[38px] pb-px"><svg width="14" height="13" viewBox="0 0 14 13" fill="none" stroke="#666"><path d="M0.500 0.500h13v12h-13zM5.500 0v7M9.500 0v7M0 7.500h10" /></svg></Slot>
      <div className="ml-[5px] h-[2px] w-[6px] bg-[#555]" />
      <div className="relative ml-[4px] flex h-[12px] w-[100px] items-center">
        <div className="h-px w-full bg-[#a0a0a0]" />
        <div className="absolute left-[48px] top-0 h-[12px] w-[5px] bg-[#666]" />
      </div>
      <svg width="8" height="8" viewBox="0 0 8 8" className="ml-[3px]"><path d="M0 4h8M4 0v8" stroke="#555" strokeWidth="2" /></svg>
      <span className="ml-[11px] w-[50px]">100%</span>
    </footer>
  );
}

export default function App() {
  return (
    <div className="flex h-[720px] w-[1280px] flex-col overflow-hidden border-r border-[#8a8a8a] bg-[#dedede] font-['Open_Sans','Noto_Sans_CJK_KR',sans-serif]">
      <div className="flex shrink-0 flex-col bg-[#1d6d48]">
        <TitleBar />
        <Tabs />
      </div>
      <Ribbon />
      <FormulaBar />
      <div className="flex h-[465px] shrink-0">
        <Sheet />
        <VerticalScroll />
      </div>
      <SheetTabs />
      <StatusBar />
    </div>
  );
}
